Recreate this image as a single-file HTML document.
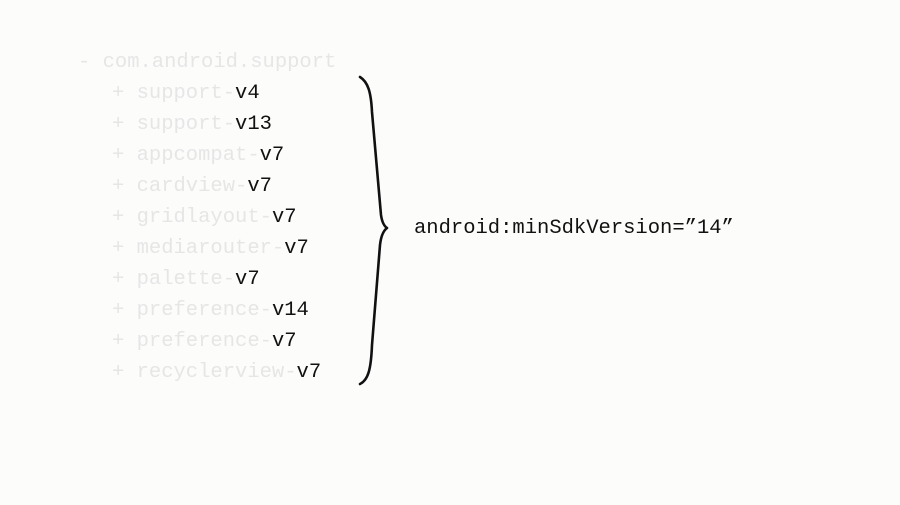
<!DOCTYPE html>
<html><head><style>
html,body{margin:0;padding:0}
body{width:900px;height:505px;background:#fcfcfb;position:relative;overflow:hidden;font-family:"Liberation Mono",monospace;font-size:20.5px}
.l{position:absolute;line-height:31px;white-space:pre;color:#e6e6e6}
.b{color:#111}
</style></head><body>
<div class="l" style="left:78px;top:47px">- com.android.support</div>
<div class="l" style="left:112px;top:78px">+ support-<span class="b">v4</span>
+ support-<span class="b">v13</span>
+ appcompat-<span class="b">v7</span>
+ cardview-<span class="b">v7</span>
+ gridlayout-<span class="b">v7</span>
+ mediarouter-<span class="b">v7</span>
+ palette-<span class="b">v7</span>
+ preference-<span class="b">v14</span>
+ preference-<span class="b">v7</span>
+ recyclerview-<span class="b">v7</span></div>
<svg style="position:absolute;left:0;top:0" width="900" height="505">
<path d="M360 77 C368 82 371 92 372 112 L381 215 C382 222 384 226 387 228 C383 231 381 236 380 245 L372 345 C371 370 368 380 360 384" fill="none" stroke="#111" stroke-width="2.6" stroke-linecap="round" stroke-linejoin="round"/>
</svg>
<div class="l b" style="left:414px;top:213px">android:minSdkVersion=”14”</div>
</body></html>
